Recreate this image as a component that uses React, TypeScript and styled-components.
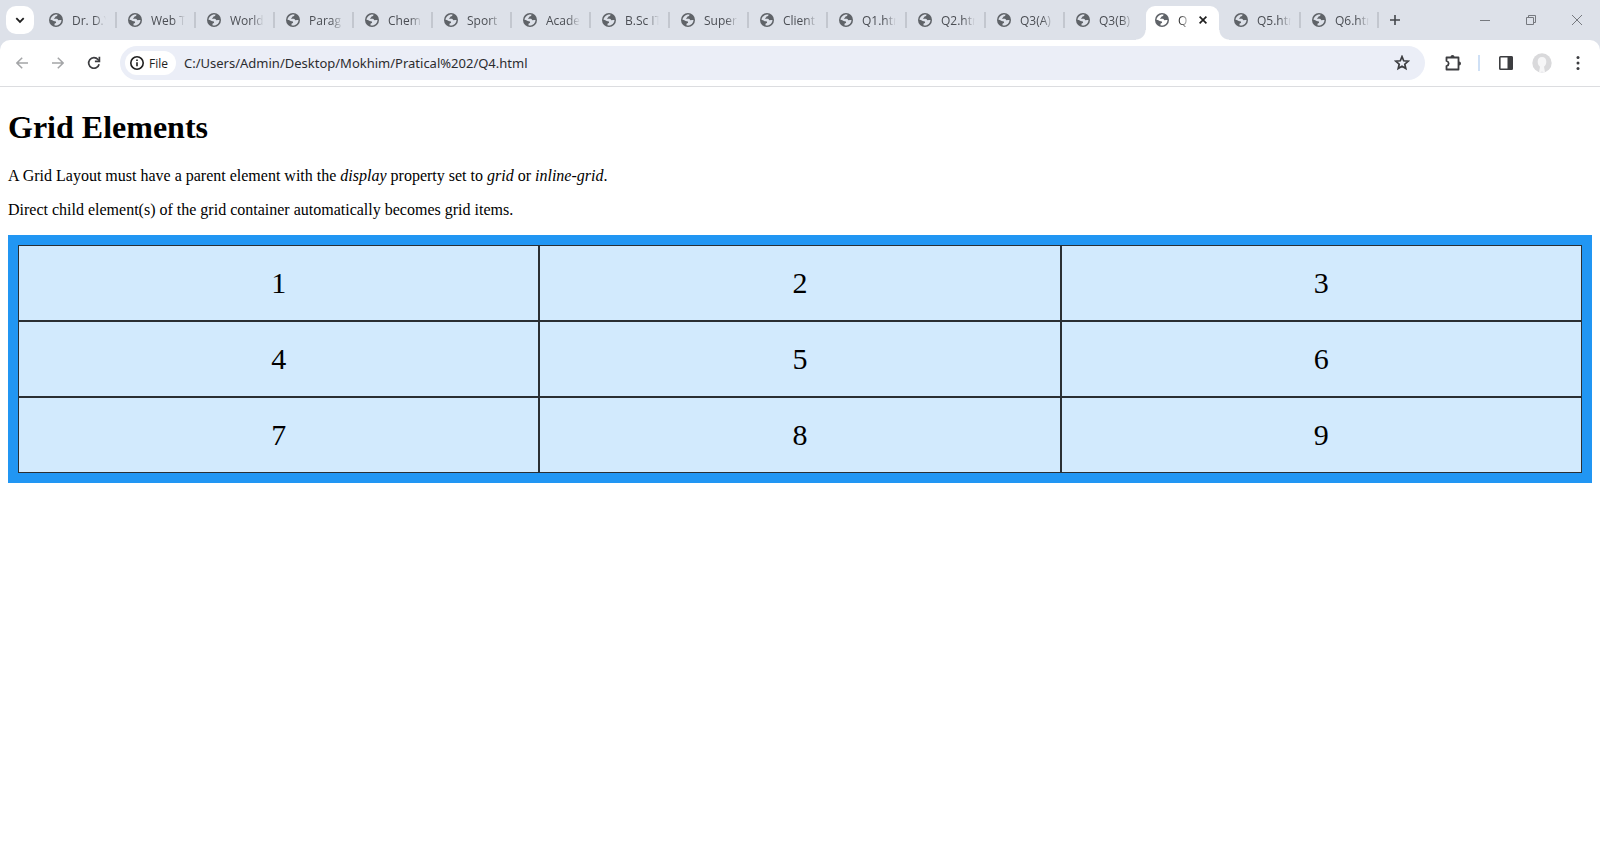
import React from 'react';
import styled, { createGlobalStyle } from 'styled-components';

const GlobalStyle = createGlobalStyle`
  *, *::before, *::after { box-sizing: border-box; }
  body { margin: 0; background: #fff; }
  button { border: 0; padding: 0; background: none; font: inherit; color: inherit; }
  svg { display: block; flex: none; }
`;

const uiFont = `'Open Sans', 'Segoe UI', sans-serif`;

const Chrome = styled.header`
  background: #dde1e9;
  font-family: ${uiFont};
`;

const TabStrip = styled.div`
  display: flex;
  height: 40px;
  padding-left: 6px;
`;

const TabSearch = styled.button`
  display: grid;
  place-items: center;
  flex: none;
  width: 28px;
  height: 28px;
  margin: 6px 4px 0 0;
  border-radius: 10px;
  background: #fff;
  color: #1f1f1f;
`;

const Tabs = styled.nav`
  display: flex;
  min-width: 0;
`;

const Tab = styled.div<{ $divider: boolean; $width: number }>`
  display: flex;
  align-items: center;
  width: ${(p) => p.$width}px;
  height: 40px;
  padding-left: 11px;
  color: #4b4e54;
  &::after {
    content: '';
    flex: none;
    width: 2px;
    height: 16px;
    margin-left: auto;
    background: ${(p) => (p.$divider ? '#c3c7cf' : 'transparent')};
  }
`;

const ActiveTab = styled.div`
  position: relative;
  display: flex;
  align-items: center;
  width: 73px;
  height: 34px;
  margin: 6px 4px 0 2px;
  padding: 0 10px 6px 9px;
  border-radius: 9px 9px 0 0;
  background: #fff;
  color: #1f1f1f;
  &::before, &::after {
    content: '';
    position: absolute;
    bottom: 0;
    width: 10px;
    height: 10px;
  }
  &::before {
    right: 100%;
    background: radial-gradient(circle at 0 0, transparent 9px, #fff 10px);
  }
  &::after {
    left: 100%;
    background: radial-gradient(circle at 100% 0, transparent 9px, #fff 10px);
  }
`;

const TabLink = styled.a<{ $width: number }>`
  width: ${(p) => p.$width}px;
  margin-left: 9px;
  padding-top: 2px;
  overflow: hidden;
  white-space: nowrap;
  font-size: 12px;
  line-height: 16px;
  color: inherit;
  text-decoration: none;
  mask-image: linear-gradient(to right, #000 calc(100% - 12px), transparent);
`;

const CloseTab = styled.button`
  display: grid;
  place-items: center;
  width: 12px;
  height: 12px;
  margin-left: auto;
`;

const NewTab = styled.button`
  display: grid;
  place-items: center;
  width: 28px;
  height: 28px;
  margin: 6px 0 0 2px;
  color: #43464b;
`;

const WindowControls = styled.div`
  display: flex;
  margin-left: auto;
`;

const WindowButton = styled.button`
  display: grid;
  place-items: center;
  width: 46px;
  height: 40px;
  color: #76797f;
`;

const Toolbar = styled.div`
  display: flex;
  align-items: center;
  height: 47px;
  padding: 0 4px 0 7px;
  border-bottom: 1px solid #dcdde0;
  border-radius: 10px 10px 0 0;
  background: #fff;
`;

const IconButton = styled.button<{ $width?: number; $muted?: boolean }>`
  display: grid;
  place-items: center;
  flex: none;
  width: ${(p) => p.$width ?? 36}px;
  height: 34px;
  color: ${(p) => (p.$muted ? '#a4a5a7' : '#3c3d40')};
`;

const Omnibox = styled.form`
  display: flex;
  align-items: center;
  flex: 1;
  min-width: 0;
  height: 34px;
  margin: 0 10px 0 11px;
  padding: 0 5px;
  border-radius: 17px;
  background: #ebeef7;
`;

const SiteChip = styled.button`
  display: flex;
  align-items: center;
  gap: 5px;
  flex: none;
  width: 51px;
  height: 24px;
  padding-left: 5px;
  border-radius: 12px;
  background: #fff;
  color: #1f1f1f;
  font-size: 12px;
`;

const Address = styled.input`
  flex: 1;
  min-width: 0;
  margin-left: 8px;
  padding: 0;
  border: 0;
  outline: 0;
  background: none;
  color: #2b2c2f;
  font-family: 'Noto Sans', 'Segoe UI', sans-serif;
  font-size: 13px;
  line-height: 20px;
`;

const ToolbarDivider = styled.span`
  width: 2px;
  height: 16px;
  margin: 0 8px 0 7px;
  background: #cfe0f5;
`;

const Page = styled.main`
  padding: 0 8px;
  color: #000;
  font-family: 'Liberation Serif', 'Times New Roman', serif;
  font-size: 16px;
  line-height: 18px;
`;

const Title = styled.h1`
  margin: 0;
  padding: 22px 0 21px;
  font-size: 32px;
  line-height: 37px;
`;

const Paragraph = styled.p`
  margin: 0 0 16px;
`;

const GridContainer = styled.div`
  display: grid;
  grid-template-columns: auto auto auto;
  padding: 10px;
  background: #2196f3;
`;

const GridItem = styled.div`
  padding: 20px;
  border: 1px solid rgba(0, 0, 0, 0.8);
  background: rgba(255, 255, 255, 0.8);
  font-size: 30px;
  line-height: 34px;
  text-align: center;
`;

const Globe = ({ land = '#dde1e9' }: { land?: string }) => (
  <svg width="14" height="14" viewBox="0 0 14 14" aria-hidden="true">
    <circle cx="7" cy="7" r="7" fill="#5f6368" />
    <path
      d="M8.4 1.500C8.600 2.600 8 3.200 7 3.300c-.8.1-.5 1.100-1.200 1.400-.8.300-.9.700-.4 1.100h2.400c1.200 0 1 1.300 1.800 1.400.9.100 1.400-.3 2.900-.2C12.400 10 10 12.500 7 12.500c-.6 0-1.100-.1-1.500-.2v-1.400c0-.8 1.600-.4 1.600-1.300 0-.9-.6-1.300-1.500-1.300C4.200 8.300 3.500 7 1.500 6.800 1.700 3.900 4.600 1 8.400 1.500z"
      fill={land}
    />
  </svg>
);

const tabsBefore = [
  'Dr. D.Y', 'Web T', 'World', 'Parag', 'Chem', 'Sport', 'Acade',
  'B.Sc IT', 'Super', 'Client', 'Q1.htm', 'Q2.htm', 'Q3(A)', 'Q3(B)',
];
const tabsAfter = ['Q5.htm', 'Q6.htm'];
const cells = [1, 2, 3, 4, 5, 6, 7, 8, 9];

export default function App() {
  return (
    <>
      <GlobalStyle />
      <Chrome>
        <TabStrip>
          <TabSearch aria-label="Search tabs">
            <svg width="10" height="10" viewBox="0 0 10 10" fill="none" stroke="currentColor" strokeWidth="1.8">
              <path d="M1.300 3.200 5 6.900l3.700-3.700" />
            </svg>
          </TabSearch>
          <Tabs aria-label="Open tabs">
            {tabsBefore.map((name, i) => (
              <Tab key={name} $width={79} $divider={i < tabsBefore.length - 1}>
                <Globe />
                <TabLink href="#" $width={34}>{name}</TabLink>
              </Tab>
            ))}
            <ActiveTab>
              <Globe land="#fff" />
              <TabLink href="#" $width={13} aria-current="page">Q</TabLink>
              <CloseTab aria-label="Close tab">
                <svg width="8" height="8" viewBox="0 0 8 8" stroke="currentColor" strokeWidth="1.700">
                  <path d="m.6.6 6.800 6.800M7.400.6.6 7.400" />
                </svg>
              </CloseTab>
            </ActiveTab>
            {tabsAfter.map((name) => (
              <Tab key={name} $width={78} $divider>
                <Globe />
                <TabLink href="#" $width={34}>{name}</TabLink>
              </Tab>
            ))}
          </Tabs>
          <NewTab aria-label="New tab">
            <svg width="10" height="10" viewBox="0 0 10 10" stroke="currentColor" strokeWidth="1.600">
              <path d="M5 0v10M0 5h10" />
            </svg>
          </NewTab>
          <WindowControls>
            <WindowButton aria-label="Minimize">
              <svg width="10" height="10" viewBox="0 0 10 10" stroke="currentColor">
                <path d="M0 5.500h10" />
              </svg>
            </WindowButton>
            <WindowButton aria-label="Restore">
              <svg width="10" height="10" viewBox="0 0 10 10" fill="none" stroke="currentColor">
                <path d="M.5 2.500h7v7h-7zM2.500 2.500v-2h7v7h-2" />
              </svg>
            </WindowButton>
            <WindowButton aria-label="Close">
              <svg width="10" height="10" viewBox="0 0 10 10" stroke="currentColor">
                <path d="m0 0 10 10M10 0 0 10" />
              </svg>
            </WindowButton>
          </WindowControls>
        </TabStrip>
        <Toolbar>
          <IconButton $muted $width={30} aria-label="Back">
            <svg width="12" height="12" viewBox="0 0 12 12" fill="none" stroke="currentColor" strokeWidth="1.500">
              <path d="M12 6H1M6.200.7.900 6l5.300 5.300" />
            </svg>
          </IconButton>
          <IconButton $muted $width={42} aria-label="Forward">
            <svg width="12" height="12" viewBox="0 0 12 12" fill="none" stroke="currentColor" strokeWidth="1.500">
              <path d="M0 6h11M5.800.7 11.100 6l-5.300 5.300" />
            </svg>
          </IconButton>
          <IconButton $width={30} aria-label="Reload">
            <svg width="14" height="14" viewBox="0 0 14 14" fill="none" stroke="currentColor" strokeWidth="1.700">
              <path d="M12.100 8.200A5.300 5.300 0 1 1 11 3.500l1 1" />
              <path d="M12.400.8v4.500H7.900" />
            </svg>
          </IconButton>
          <Omnibox>
            <SiteChip type="button">
              <svg width="14" height="14" viewBox="0 0 14 14" fill="none" stroke="currentColor" strokeWidth="1.600">
                <circle cx="7" cy="7" r="6.200" />
                <path d="M7 6.200v4M7 3.500v1.500" />
              </svg>
              File
            </SiteChip>
            <Address aria-label="Address" defaultValue="C:/Users/Admin/Desktop/Mokhim/Pratical%202/Q4.html" />
            <IconButton type="button" aria-label="Bookmark this page">
              <svg width="16" height="16" viewBox="0 0 16 16" fill="none" stroke="currentColor" strokeWidth="1.700">
                <path d="m8 1.600 1.700 4.200 4.500.4-3.400 3 1 4.400L8 11.300l-3.800 2.300 1-4.400-3.400-3 4.500-.4z" />
              </svg>
            </IconButton>
          </Omnibox>
          <IconButton aria-label="Extensions">
            <svg width="18" height="18" viewBox="0 0 18 18">
              <path d="M2.500 3.500H14.500V15.500H2.500V12C5.400 11.200 5.400 7.800 2.500 7Z" fill="none" stroke="currentColor" strokeWidth="1.800" strokeLinejoin="round" />
              <path d="M6.500 3a2 2 0 0 1 4 0zM15 7.500a2 2 0 0 1 0 4z" fill="currentColor" />
            </svg>
          </IconButton>
          <ToolbarDivider />
          <IconButton aria-label="Side panel">
            <svg width="14" height="14" viewBox="0 0 14 14">
              <rect x=".8" y=".8" width="12.400" height="12.400" rx=".8" fill="none" stroke="currentColor" strokeWidth="1.600" />
              <path d="M8.500.5h5v13h-5z" fill="currentColor" />
            </svg>
          </IconButton>
          <IconButton aria-label="Profile">
            <svg width="20" height="20" viewBox="0 0 20 20">
              <circle cx="10" cy="10" r="9.700" fill="#d9d9db" />
              <path d="M10 4c2.800 0 4.300 2 4.300 4.800 0 2.200-.9 4-2.300 4.900l1 5.500-2.500.6-.5-2-.5 2-2.500-.6 1-5.500C6.600 12.800 5.700 11 5.700 8.800 5.700 6 7.200 4 10 4z" fill="#f6f6f7" />
            </svg>
          </IconButton>
          <IconButton aria-label="Menu">
            <svg width="4" height="14" viewBox="0 0 4 14" fill="currentColor">
              <circle cx="2" cy="1.600" r="1.500" />
              <circle cx="2" cy="7" r="1.500" />
              <circle cx="2" cy="12.400" r="1.500" />
            </svg>
          </IconButton>
        </Toolbar>
      </Chrome>
      <Page>
        <Title>Grid Elements</Title>
        <Paragraph>
          A Grid Layout must have a parent element with the <em>display</em> property set to <em>grid</em> or{' '}
          <em>inline-grid</em>.
        </Paragraph>
        <Paragraph>Direct child element(s) of the grid container automatically becomes grid items.</Paragraph>
        <GridContainer>
          {cells.map((n) => (
            <GridItem key={n}>{n}</GridItem>
          ))}
        </GridContainer>
      </Page>
    </>
  );
}
